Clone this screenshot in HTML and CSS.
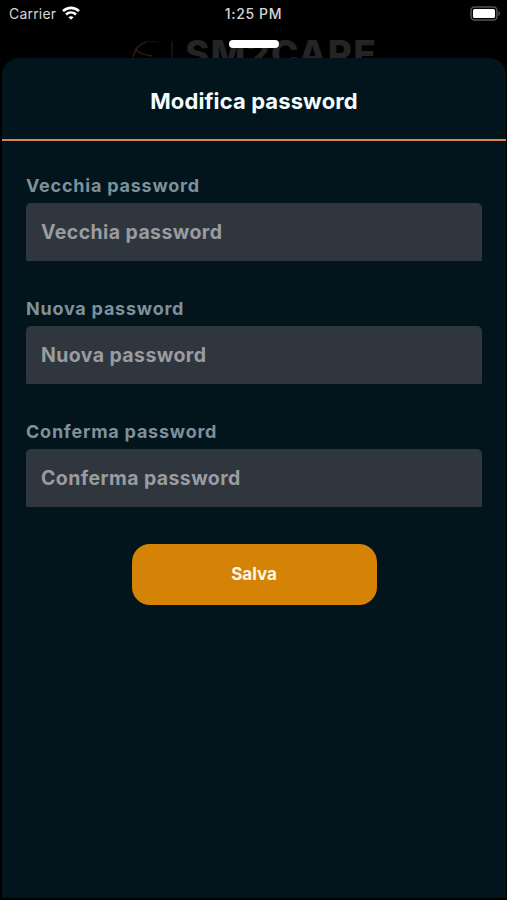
FILE: index.html
```html
<!DOCTYPE html>
<html lang="it">
<head>
<meta charset="utf-8">
<title>Modifica password</title>
<link rel="stylesheet" href="styles.css">
</head>
<body>
<header class="backdrop">
  <div class="status">
    <div class="carrier"><span>Carrier</span>
      <svg class="wifi" width="18" height="14" viewBox="0 0 18 14" fill="none" stroke="#fff" stroke-width="2.6"><path d="M1 5.1C5.6.8 12.4.8 17 5.1M4 8.5c2.9-2.7 7.1-2.7 10 0"/><path d="M6.4 11.2c1.5-1.4 3.7-1.4 5.2 0L9 13.8z" fill="#fff" stroke="none"/></svg>
    </div>
    <time class="clock">1:25 PM</time>
    <svg class="battery" width="31" height="16" viewBox="0 0 31 16"><rect x="1" y="1" width="26" height="13" rx="3.5" fill="none" stroke="#555" stroke-width="1.5"/><rect x="3" y="3" width="22" height="9" rx="1.5" fill="#fff"/><path d="M28.5 5v5c2-1 2-4 0-5z" fill="#555"/></svg>
  </div>
  <div class="brand">
    <svg class="mark" width="44" height="22" viewBox="0 0 44 22" fill="none"><path d="M14 2C7 4 3 9 1 17M3 9c6 6 12 6 17 7" stroke="#35180f" stroke-width="1.5"/><path d="M14 2c5-1 9-1 13 1" stroke="#1c1110"/><path d="M40 1v21" stroke="#191919" stroke-width="1.5"/></svg>
    <span class="brand-name">SM2CARE</span>
  </div>
  <div class="grabber"></div>
</header>
<main class="sheet">
  <h1 class="title">Modifica password</h1>
  <form class="form">
    <label class="field"><span class="label">Vecchia password</span><span class="box"><span class="hint">Vecchia password</span></span></label>
    <label class="field"><span class="label">Nuova password</span><span class="box"><span class="hint">Nuova password</span></span></label>
    <label class="field"><span class="label">Conferma password</span><span class="box"><span class="hint">Conferma password</span></span></label>
    <button class="save" type="button">Salva</button>
  </form>
</main>
</body>
</html>
```
FILE: styles.css
```css
* { box-sizing: border-box; }
body {
  margin: 0;
  height: 900px;
  overflow: hidden;
  display: flex;
  flex-direction: column;
  background: #000;
  font-family: Inter, "Liberation Sans", sans-serif;
}
.backdrop {
  position: relative;
  height: 58px;
  flex: none;
}
.status {
  display: grid;
  grid-template-columns: 1fr auto 1fr;
  align-items: center;
  height: 27px;
  padding: 0 6px 0 9px;
  color: #d8d8d8;
  font-size: 14px;
}
.carrier { display: flex; align-items: center; gap: 6px; letter-spacing: .2px; }
.wifi { margin-top: -1px; }
.clock { margin-right: 3px; font-weight: 500; letter-spacing: .65px; }
.battery { justify-self: end; }
.brand {
  display: flex;
  align-items: flex-start;
  gap: 9px;
  margin: 13px 0 0 132px;
}
.brand-name {
  color: #232424;
  font-size: 37px;
  line-height: 28px;
  font-weight: 800;
  letter-spacing: 1px;
}
.grabber {
  position: absolute;
  top: 40px;
  left: 229px;
  width: 50px;
  height: 8px;
  border-radius: 4px;
  background: #fff;
}
.sheet {
  position: relative;
  flex: none;
  height: 840px;
  margin: 0 1px 0 2px;
  border-radius: 17px 17px 1px 1px;
  background: #02151d;
}
.title {
  display: flex;
  align-items: center;
  justify-content: center;
  height: 83px;
  margin: 0;
  padding-top: 4px;
  border-bottom: 2px solid #da8650;
  color: #f3fcff;
  font-size: 22px;
  font-weight: 650;
  letter-spacing: .12px;
}
.form {
  display: flex;
  flex-direction: column;
  padding: 32.6px 24px 0;
}
.field { display: block; margin-bottom: 36.4px; }
.label {
  display: block;
  height: 29px;
  color: #7e9099;
  font-size: 18px;
  line-height: 23px;
  font-weight: 650;
  letter-spacing: .77px;
}
.box {
  display: flex;
  align-items: center;
  height: 58px;
  padding: 0 15px;
  border-radius: 5px 5px 1px 1px;
  background: #30363e;
}
.hint { color: #999ca0; font-size: 19.5px; font-weight: 650; letter-spacing: .4px; }
.save {
  align-self: center;
  width: 245px;
  height: 61px;
  margin: 0;
  padding: 0;
  border: 0;
  border-radius: 18px;
  background: #d48307;
  color: #fff7e5;
  font: 700 17px Inter, "Liberation Sans", sans-serif;
}
```
